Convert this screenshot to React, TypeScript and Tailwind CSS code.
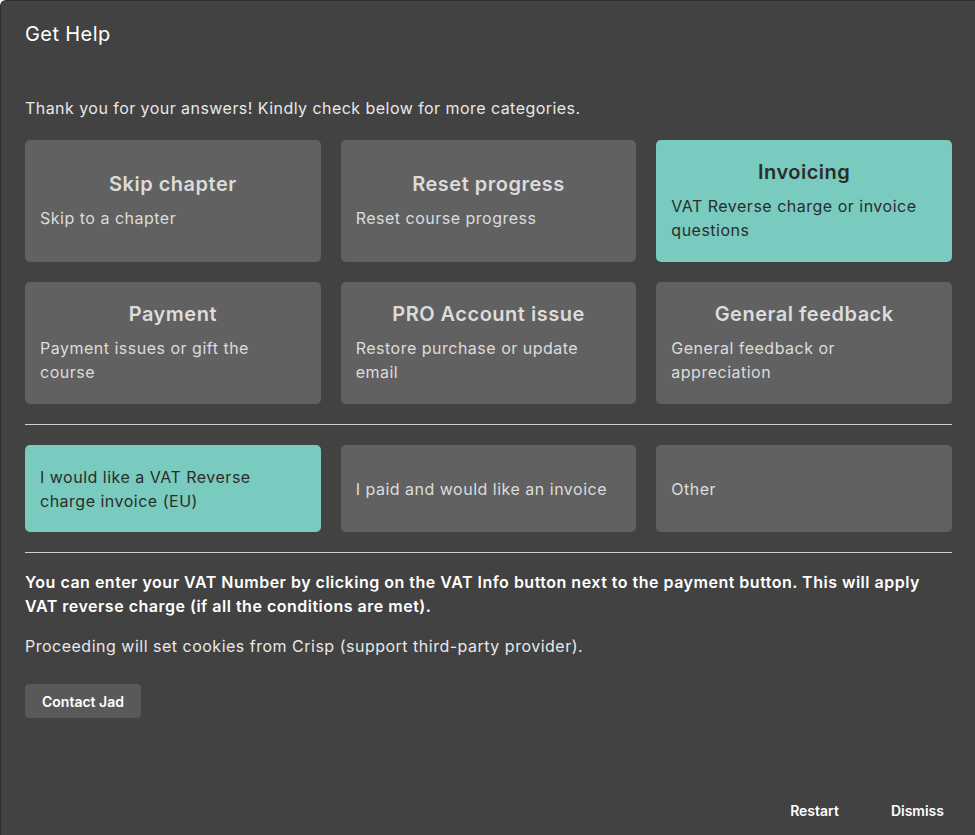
import { useState } from 'react';

interface Category {
  title: string;
  description: string;
}

const categories: Category[] = [
  { title: 'Skip chapter', description: 'Skip to a chapter' },
  { title: 'Reset progress', description: 'Reset course progress' },
  { title: 'Invoicing', description: 'VAT Reverse charge or invoice questions' },
  { title: 'Payment', description: 'Payment issues or gift the course' },
  { title: 'PRO Account issue', description: 'Restore purchase or update email' },
  { title: 'General feedback', description: 'General feedback or appreciation' },
];

const options = [
  'I would like a VAT Reverse charge invoice (EU)',
  'I paid and would like an invoice',
  'Other',
];

const App = () => {
  const [category, setCategory] = useState(2);
  const [option, setOption] = useState(0);

  return (
    <div
      className="w-[975px] h-[835px] overflow-hidden bg-[#424242] border-l border-t border-[#2e2e2e] rounded-tl-md flex flex-col text-[#e6e6e6]"
      style={{ fontFamily: 'Inter, "Noto Sans", sans-serif' }}
    >
      <div className="pl-6 pr-[23px] flex flex-col flex-1">
        <h1 className="text-[20px] leading-6 pt-[21px] text-white tracking-[0.4px]">Get Help</h1>

        <p className="mt-[50px] text-[16px] leading-6 tracking-[0.45px] text-[#e8e8e8]">
          Thank you for your answers! Kindly check below for more categories.
        </p>

        <div className="grid grid-cols-3 gap-5 mt-[20px]">
          {categories.map((c, i) => {
            const active = i === category;
            return (
              <button
                key={c.title}
                onClick={() => setCategory(i)}
                className={`h-[122px] rounded-[5px] px-[15px] flex flex-col justify-center text-left ${
                  active ? 'bg-[#78cbbe] text-[#2c2c2c]' : 'bg-[#616161] text-[#dcdcdc]'
                }`}
              >
                <span className="block text-center text-[20px] leading-6 font-semibold tracking-[0.5px] mb-[10px]">
                  {c.title}
                </span>
                <span className="block text-[16px] leading-6 tracking-[0.5px]">{c.description}</span>
              </button>
            );
          })}
        </div>

        <div className="h-px bg-[#cfcfcf] mt-[20px]" />

        <div className="grid grid-cols-3 gap-5 mt-5">
          {options.map((o, i) => {
            const active = i === option;
            return (
              <button
                key={o}
                onClick={() => setOption(i)}
                className={`h-[87px] rounded-[5px] px-[15px] text-left text-[16px] leading-6 tracking-[0.5px] ${
                  active ? 'bg-[#78cbbe] text-[#2c2c2c]' : 'bg-[#616161] text-[#dcdcdc]'
                }`}
              >
                {o}
              </button>
            );
          })}
        </div>

        <div className="h-px bg-[#cfcfcf] mt-[20px]" />

        <p className="mt-[17px] text-[16px] leading-6 font-semibold tracking-[0.5px] text-white">
          You can enter your VAT Number by clicking on the VAT Info button next to the payment button. This will apply
          VAT reverse charge (if all the conditions are met).
        </p>

        <p className="mt-[16px] text-[16px] leading-6 tracking-[0.5px] text-[#e8e8e8]">
          Proceeding will set cookies from Crisp (support third-party provider).
        </p>

        <div className="mt-[26px]">
          <button className="h-[34px] px-[17px] rounded-[4px] bg-[#595959] text-[14px] font-semibold text-white">
            Contact Jad
          </button>
        </div>

        <div className="mt-auto flex justify-end gap-[52px] pb-[14px] pr-[8px] text-[14px] font-semibold text-white">
          <button>Restart</button>
          <button>Dismiss</button>
        </div>
      </div>
    </div>
  );
};

export default App;
